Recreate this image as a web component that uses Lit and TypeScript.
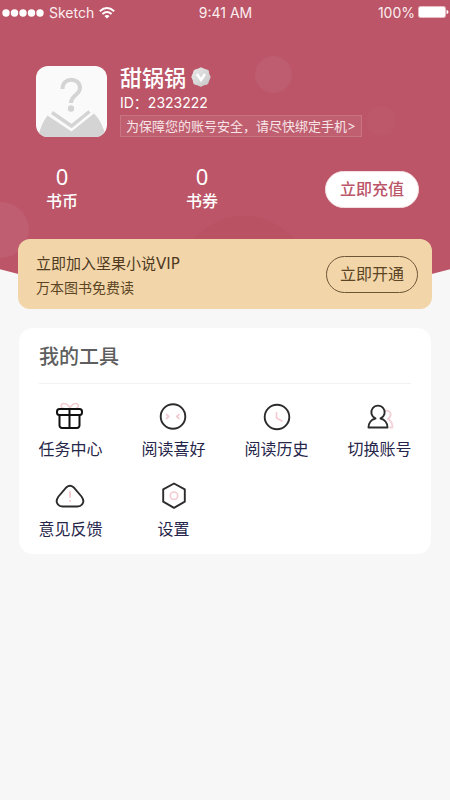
import { LitElement, html, css, svg } from "lit";
import { customElement } from "lit/decorators.js";

const gift = svg`
  <g fill="none" stroke-linejoin="round" stroke-linecap="round">
    <path d="M15 6C13 2 11 1.500 8.500 1.500C5.500 1.500 5.500 6 8 6M15 6C17 2 19 1.500 21 1.500C24 1.500 24 6 21.500 6" stroke="#f3cdd3" stroke-width="1.500"/>
    <rect x="2" y="7" width="25" height="6" rx="2.500" stroke="#111" stroke-width="2"/>
    <path d="M4.500 13V23.500a2.500 2.500 0 0 0 2.500 2.500H22a2.500 2.500 0 0 0 2.500-2.500V13M14.500 7.500V25.500" stroke="#111" stroke-width="2"/>
  </g>`;
const face = svg`
  <g fill="none" stroke-linecap="round" stroke-linejoin="round">
    <circle cx="15" cy="14.500" r="12.300" stroke="#2c2c2c" stroke-width="1.900"/>
    <path d="M8.500 12.500L10.800 14.500L8.500 16.500M21 12.500L18.700 14.500L21 16.500" stroke="#f3cdd3" stroke-width="1.700"/>
  </g>`;
const clock = svg`
  <g fill="none" stroke-linecap="round" stroke-linejoin="round">
    <circle cx="16" cy="15" r="12.300" stroke="#2c2c2c" stroke-width="1.900"/>
    <path d="M15.500 10.500V16L21 19" stroke="#f3cdd3" stroke-width="1.700"/>
  </g>`;
const people = svg`
  <g fill="none" stroke-linejoin="round" stroke-linecap="round" stroke-width="1.900">
    <path d="M22 8.500C27.500 9 28 14 24 17C27 18.500 28.500 21.500 28.500 25.500H26" stroke="#f5d2d7"/>
    <path d="M11.500 16.500A6.700 6.700 0 1 1 16.500 16.500C20.500 17.500 23.500 21 23.500 25.500H4.500C4.500 21 7.500 17.500 11.500 16.500" stroke="#2c2c2c"/>
  </g>`;
const alertIcon = svg`
  <g fill="none" stroke-linejoin="round" stroke-linecap="round">
    <path d="M11.500 5.200Q15 2.200 18.500 5.200L26.500 14.500Q30 19.500 27 22.500Q25.500 24.500 22.500 24.500H7.500Q4.500 24.500 3 22.500Q0 19.500 3.500 14.500Z" stroke="#2c2c2c" stroke-width="1.900"/>
    <path d="M15 10V15M15 18.800V19" stroke="#f3cdd3" stroke-width="1.900"/>
  </g>`;
const hex = svg`
  <g fill="none" stroke-linejoin="round">
    <path d="M16 1.500L26.800 7.300V19.700L16 25.800L5.200 19.700V7.300Z" stroke="#2c2c2c" stroke-width="1.900"/>
    <circle cx="16" cy="13.700" r="3.700" stroke="#f3cdd3" stroke-width="1.700"/>
  </g>`;

const tools = [
  { label: "任务中心", icon: gift },
  { label: "阅读喜好", icon: face },
  { label: "阅读历史", icon: clock },
  { label: "切换账号", icon: people },
  { label: "意见反馈", icon: alertIcon },
  { label: "设置", icon: hex },
];

@customElement("app-root")
export class AppRoot extends LitElement {
  static styles = css`
    :host {
      display: block;
      min-height: 100vh;
      background: #f7f7f7;
      font-family: "Noto Sans", "Noto Sans CJK SC", sans-serif;
    }
    * { box-sizing: border-box; }
    button { font: inherit; cursor: pointer; }
    a { color: inherit; text-decoration: none; }
    svg { display: block; }
    .hero {
      position: relative;
      padding-bottom: 86px;
      overflow: hidden;
      color: #fff;
      background: #bb5567;
      clip-path: ellipse(186% 835px at 50% calc(100% - 835px));
    }
    .bubble { position: absolute; border-radius: 50%; }
    .b1 { left: 255px; top: 56px; width: 37px; height: 37px; background: #be5d6f; }
    .b2 { left: 366px; top: 106px; width: 30px; height: 30px; background: #bc586a; }
    .b3 { left: -27px; top: 202px; width: 56px; height: 56px; background: #bf5e70; }
    .b4 { left: 179px; top: 216px; width: 130px; height: 130px; background: #b95263; }
    .status {
      position: relative;
      display: grid;
      grid-template-columns: 1fr auto 1fr;
      align-items: center;
      height: 26px;
      padding: 0 1px 0 2px;
      font: 14px/26px Inter, sans-serif;
      color: #fbeef0;
    }
    .carrier, .power { display: flex; align-items: center; }
    .carrier { gap: 5px; }
    .power { justify-content: flex-end; gap: 3px; }
    .profile {
      position: relative;
      display: flex;
      gap: 13px;
      margin-top: 40px;
      padding: 0 36px;
    }
    .info { display: flex; flex-direction: column; align-items: flex-start; }
    .name-row { display: flex; align-items: center; gap: 5px; height: 22px; }
    .name { margin: 0; font-size: 22px; line-height: 22px; font-weight: 500; }
    .uid { font: 14px/20px Inter, "Noto Sans CJK SC", sans-serif; margin: 5px 0 2px; }
    .bind {
      height: 22px;
      padding: 0 5px;
      border: 1px solid #c87483;
      background: #bf5f70;
      color: #f8e4e7;
      font: 13px/20px Inter, "Noto Sans CJK SC", sans-serif;
      white-space: nowrap;
    }
    .assets {
      position: relative;
      display: flex;
      align-items: center;
      gap: 80px;
      margin-top: 27px;
      padding: 0 31px 0 32px;
    }
    .stat { width: 60px; text-align: center; }
    .num { font-size: 22px; line-height: 24px; }
    .cap { font-size: 16px; line-height: 26px; font-weight: 500; }
    .pill { border-radius: 19px; height: 37px; padding: 0; text-align: center; font-size: 16px; line-height: 24px; }
    .recharge {
      width: 94px;
      margin-left: auto;
      border: 1px solid #f3dfe2;
      background: #fff;
      color: #bb5567;
      font-weight: 500;
    }
    .vip {
      position: relative;
      display: flex;
      align-items: center;
      justify-content: space-between;
      min-height: 70px;
      margin: -61px 18px 0;
      padding: 0 14px 0 18px;
      border-radius: 12px;
      background: #f2d6aa;
      color: #5c4525;
    }
    .vip-text { padding-top: 4px; }
    .vip-title {
      margin: 0;
      font: 400 15px/24px "DejaVu Sans", "Noto Sans CJK SC", sans-serif;
      color: #4f3a1f;
    }
    .vip-sub { margin: 0; font-size: 14px; line-height: 24px; }
    .open { width: 92px; border: 1px solid #6e5536; background: none; color: #5c4525; }
    .tools {
      margin: 19px 19px 0;
      padding-bottom: 13px;
      border-radius: 14px;
      background: #fff;
    }
    .tools-title {
      margin: 0 20px;
      height: 56px;
      border-bottom: 1px solid #f2f2f2;
      font-size: 20px;
      line-height: 58px;
      font-weight: 500;
      color: #5e5e5e;
    }
    .grid {
      display: grid;
      grid-template-columns: repeat(4, 1fr);
      row-gap: 21px;
      margin-top: 18px;
    }
    .tool {
      display: flex;
      flex-direction: column;
      align-items: center;
      gap: 5px;
      font-size: 16px;
      line-height: 24px;
      color: #26264a;
    }
    .tool-icon { margin-right: 2px; }
  `;

  render() {
    return html`
      <header class="hero">
        <span class="bubble b1"></span><span class="bubble b2"></span>
        <span class="bubble b3"></span><span class="bubble b4"></span>
        <div class="status">
          <div class="carrier">
            <svg width="42" height="8" viewBox="0 0 42 8" fill="#fff">
              ${[4, 12.5, 21, 29.5, 38].map((x) => svg`<circle cx=${x} cy="4" r="3.700"/>`)}
            </svg>
            <span>Sketch</span>
            <svg width="16" height="12" viewBox="0 0 16 12" fill="none" stroke="#fff" stroke-width="1.900">
              <path d="M.8 4.200Q8-2.200 15.200 4.200M3.400 7Q8 3 12.600 7"/>
              <path d="M5.400 9Q8 6.800 10.600 9L8 11.600Z" fill="#fff" stroke="none"/>
            </svg>
          </div>
          <span>9:41 AM</span>
          <div class="power">
            <span>100%</span>
            <svg width="31" height="14" viewBox="0 0 31 14">
              <rect x=".5" y=".5" width="27" height="11" rx="2" fill="#fff" stroke="#e6bcc4"/>
              <path d="M28.500 4Q30.500 4 30.500 6T28.500 8Z" fill="#fff"/>
            </svg>
          </div>
        </div>
        <section class="profile">
          <svg width="71" height="71" viewBox="0 0 71 71" role="img" aria-label="头像">
            <clipPath id="av"><rect width="71" height="71" rx="12"/></clipPath>
            <g clip-path="url(#av)">
              <rect width="71" height="71" fill="#fafafa"/>
              <path d="M2 71Q5 58 11.500 49.500L35.500 65.500L58 47.500Q66 55 70 71Z" fill="#d4d4d4"/>
              <path d="M16 46.500L35.500 60L53.500 45.500" fill="none" stroke="#d4d4d4" stroke-width="3.500"/>
              <path d="M26.500 23C26.500 10.500 44 11 44 22C44 29 35 29 35 37" fill="none" stroke="#d4d4d4" stroke-width="4"/>
              <circle cx="35" cy="42.500" r="3.200" fill="#d4d4d4"/>
            </g>
          </svg>
          <div class="info">
            <div class="name-row">
              <h1 class="name">甜锅锅</h1>
              <svg width="20" height="20" viewBox="0 0 20 20">
                <defs><linearGradient id="badge" x2="1" y2="1"><stop stop-color="#e8e8e8"/><stop offset="1" stop-color="#c8c8c8"/></linearGradient></defs>
                <path d="M10 .8L13.500 2.300L17.200 3.500L17.800 7L19.200 10L17.800 13.500L16.500 17L13 17.800L10 19.300L6.500 17.900L3 16.800L2.200 13.200L.8 10L2.200 6.500L3.300 3.300L6.800 2.200Z" fill="url(#badge)" stroke="url(#badge)" stroke-linejoin="round"/>
                <path d="M6 7L10 13L14 7" fill="none" stroke="#fff" stroke-width="2.600"/>
              </svg>
            </div>
            <div class="uid">ID：2323222</div>
            <a class="bind" href="#bind">为保障您的账号安全，请尽快绑定手机&gt;</a>
          </div>
        </section>
        <section class="assets">
          <div class="stat"><div class="num">0</div><div class="cap">书币</div></div>
          <div class="stat"><div class="num">0</div><div class="cap">书券</div></div>
          <button class="pill recharge">立即充值</button>
        </section>
      </header>
      <section class="vip">
        <div class="vip-text">
          <h2 class="vip-title">立即加入坚果小说VIP</h2>
          <p class="vip-sub">万本图书免费读</p>
        </div>
        <button class="pill open">立即开通</button>
      </section>
      <section class="tools">
        <h2 class="tools-title">我的工具</h2>
        <nav class="grid">
          ${tools.map(
            (t) => html`<a class="tool" href="#tool">
              <svg class="tool-icon" width="30" height="30" viewBox="0 0 30 30">${t.icon}</svg>
              <span>${t.label}</span>
            </a>`
          )}
        </nav>
      </section>
    `;
  }
}
